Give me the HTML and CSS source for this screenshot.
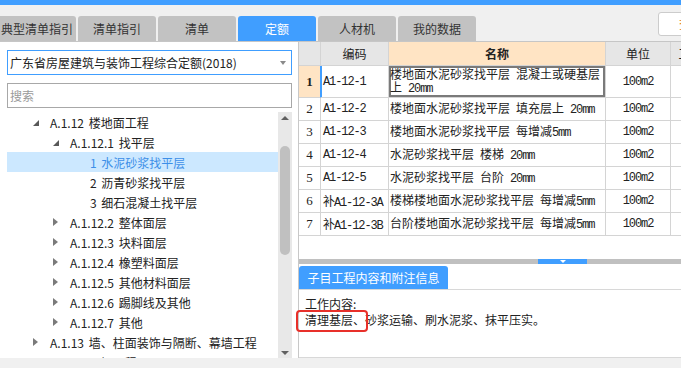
FILE: index.html
```html
<!DOCTYPE html>
<html lang="zh-CN">
<head>
    <meta charset="UTF-8">
    <meta name="viewport" content="width=device-width, initial-scale=1.0">
    <title>定额库</title>
    <link rel="stylesheet" href="styles.css">
</head>
<body>
    <div class="topbar"></div>

    <!-- 顶部页签 -->
    <div class="tabbar">
        <div class="tab">典型清单指引</div>
        <div class="tab">清单指引</div>
        <div class="tab">清单</div>
        <div class="tab active">定额</div>
        <div class="tab">人材机</div>
        <div class="tab">我的数据</div>
        <div class="tool-box">查询</div>
    </div>

    <div class="main">
        <!-- 左侧：定额库与章节树 -->
        <div class="side">
            <div class="select-box">
                <span>广东省房屋建筑与装饰工程综合定额(2018)</span>
                <i class="caret"></i>
            </div>
            <input type="text" class="search-box" placeholder="搜索">
            <div class="tree-wrap">
                <ul class="tree">
                    <li class="l1"><i class="arrow open"></i>A.1.12 楼地面工程</li>
                    <li class="l2"><i class="arrow open"></i>A.1.12.1 找平层</li>
                    <li class="l3 sel">1 水泥砂浆找平层</li>
                    <li class="l3">2 沥青砂浆找平层</li>
                    <li class="l3">3 细石混凝土找平层</li>
                    <li class="l2"><i class="arrow"></i>A.1.12.2 整体面层</li>
                    <li class="l2"><i class="arrow"></i>A.1.12.3 块料面层</li>
                    <li class="l2"><i class="arrow"></i>A.1.12.4 橡塑料面层</li>
                    <li class="l2"><i class="arrow"></i>A.1.12.5 其他材料面层</li>
                    <li class="l2"><i class="arrow"></i>A.1.12.6 踢脚线及其他</li>
                    <li class="l2"><i class="arrow"></i>A.1.12.7 其他</li>
                    <li class="l1"><i class="arrow"></i>A.1.13 墙、柱面装饰与隔断、幕墙工程</li>
                    <li class="l1"><i class="arrow"></i>A.1.14 天棚工程</li>
                </ul>
                <div class="scrollbar">
                    <div class="sb-up"></div>
                    <div class="sb-track"><div class="sb-thumb"></div></div>
                    <div class="sb-down"></div>
                </div>
            </div>
        </div>

        <!-- 右侧：定额子目表格 -->
        <div class="content">
            <div class="grid-area">
                <table class="grid">
                    <colgroup>
                        <col class="c-no">
                        <col class="c-code">
                        <col class="c-name">
                        <col class="c-unit">
                        <col class="c-qty">
                        <col class="c-more">
                    </colgroup>
                    <thead>
                        <tr>
                            <th></th>
                            <th>编码</th>
                            <th class="sorted">名称</th>
                            <th>单位</th>
                            <th>工程量</th>
                            <th></th>
                        </tr>
                    </thead>
                    <tbody>
                        <tr class="current tall">
                            <td class="no">1</td>
                            <td class="code">A1-12-1</td>
                            <td class="name focus">楼地面水泥砂浆找平层&ensp;混凝土或硬基层<br>上&ensp;<span class="en">20mm</span></td>
                            <td class="unit">100m2</td>
                            <td></td><td></td>
                        </tr>
                        <tr>
                            <td class="no">2</td>
                            <td class="code">A1-12-2</td>
                            <td class="name">楼地面水泥砂浆找平层&ensp;填充层上&ensp;<span class="en">20mm</span></td>
                            <td class="unit">100m2</td>
                            <td></td><td></td>
                        </tr>
                        <tr>
                            <td class="no">3</td>
                            <td class="code">A1-12-3</td>
                            <td class="name">楼地面水泥砂浆找平层&ensp;每增减<span class="en">5mm</span></td>
                            <td class="unit">100m2</td>
                            <td></td><td></td>
                        </tr>
                        <tr>
                            <td class="no">4</td>
                            <td class="code">A1-12-4</td>
                            <td class="name">水泥砂浆找平层&ensp;楼梯&ensp;<span class="en">20mm</span></td>
                            <td class="unit">100m2</td>
                            <td></td><td></td>
                        </tr>
                        <tr>
                            <td class="no">5</td>
                            <td class="code">A1-12-5</td>
                            <td class="name">水泥砂浆找平层&ensp;台阶&ensp;<span class="en">20mm</span></td>
                            <td class="unit">100m2</td>
                            <td></td><td></td>
                        </tr>
                        <tr>
                            <td class="no">6</td>
                            <td class="code">补A1-12-3A</td>
                            <td class="name">楼梯楼地面水泥砂浆找平层&ensp;每增减<span class="en">5mm</span></td>
                            <td class="unit">100m2</td>
                            <td></td><td></td>
                        </tr>
                        <tr>
                            <td class="no">7</td>
                            <td class="code">补A1-12-3B</td>
                            <td class="name">台阶楼地面水泥砂浆找平层&ensp;每增减<span class="en">5mm</span></td>
                            <td class="unit">100m2</td>
                            <td></td><td></td>
                        </tr>
                    </tbody>
                </table>
            </div>

            <div class="splitter"><div class="split-handle"></div></div>

            <!-- 子目信息 -->
            <div class="info">
                <div class="info-tabs">
                    <div class="info-tab">子目工程内容和附注信息</div>
                </div>
                <div class="info-body">
                    <p>工作内容:</p>
                    <p>清理基层、砂浆运输、刷水泥浆、抹平压实。</p>
                </div>
                <div class="mark"></div>
            </div>
        </div>
    </div>

    <div class="statusbar"></div>
</body>
</html>
```

FILE: styles.css
```css
/* Estilos gerais */
* {
    box-sizing: border-box;
}
html, body {
    margin: 0;
}
body {
    font-family: "Noto Sans CJK SC", "Noto Sans", sans-serif;
    font-size: 12px;
    color: #222;
    background-color: #f0f0f0;
    width: 681px;
    height: 368px;
    overflow: hidden;
}
.topbar {
    height: 5px;
    background-color: #409eff;
}

/* Página superior */
.tabbar {
    display: flex;
    align-items: flex-start;
    gap: 2px;
    height: 37px;
    padding-top: 11px;
    border-bottom: 1px solid #c6c6c6;
}
.tab {
    flex: none;
    width: 78px;
    height: 25px;
    line-height: 25px;
    text-align: center;
    background-color: #c2c2c2;
    color: #333;
    border-radius: 3px 3px 0 0;
}
.tab:first-child {
    margin-left: -2px;
}
.tab.active {
    background-color: #409eff;
    color: #fff;
}
.tool-box {
    flex: none;
    margin-left: auto;
    margin-right: -40px;
    margin-top: -4px;
    width: 63px;
    height: 24px;
    line-height: 22px;
    padding-left: 20px;
    background-color: #fff;
    border: 1px solid #ccc;
    border-radius: 3px;
    color: #e07b20;
    white-space: nowrap;
    overflow: hidden;
}

.main {
    display: flex;
    height: 316px;
    background-color: #fff;
}

/* Lado esquerdo */
.side {
    flex: none;
    width: 298px;
    display: flex;
    flex-direction: column;
    padding: 8px 6px 0 7px;
}
.select-box {
    display: flex;
    align-items: center;
    height: 25px;
    padding: 0 5px 0 2px;
    border: 1px solid #409eff;
    color: #222;
}
.select-box span {
    flex: 1;
    white-space: nowrap;
}
.caret {
    border-top: 4px solid #8a8a8a;
    border-left: 3px solid transparent;
    border-right: 3px solid transparent;
}
.search-box {
    margin: 8px 0 0;
    height: 25px;
    padding: 0 2px;
    border: 1px solid #a8a8a8;
    border-radius: 0;
    font-family: inherit;
    font-size: 12px;
    outline: none;
}
.search-box::placeholder {
    color: #9a9a9a;
}
.tree-wrap {
    flex: 1;
    min-height: 0;
    margin-top: 4px;
    display: flex;
}
.tree {
    flex: 1;
    list-style: none;
    margin: 0;
    padding: 0;
    overflow: hidden;
    word-spacing: 2px;
}
.tree li {
    display: flex;
    align-items: center;
    height: 20px;
    white-space: nowrap;
}
.tree .l1 {
    padding-left: 26px;
}
.tree .l2 {
    padding-left: 46px;
}
.tree .l3 {
    padding-left: 83px;
}
.tree li.sel {
    background-color: #cce8ff;
    color: #3d8fe8;
}
.arrow {
    flex: none;
    width: 0;
    height: 0;
    margin-right: 12px;
    border-left: 5px solid #7a7a7a;
    border-top: 4px solid transparent;
    border-bottom: 4px solid transparent;
}
.arrow.open {
    margin-top: 2px;
    margin-right: 11px;
    border-left: 6px solid transparent;
    border-top: 0;
    border-bottom: 6px solid #585858;
}
.scrollbar {
    flex: none;
    width: 14px;
    display: flex;
    flex-direction: column;
    align-items: center;
    background-color: #e8e8e8;
}
.sb-up, .sb-down {
    display: flex;
    align-items: center;
    justify-content: center;
    height: 11px;
}
.sb-up::before {
    content: "";
    border-bottom: 4px solid #606060;
    border-left: 4px solid transparent;
    border-right: 4px solid transparent;
}
.sb-down::before {
    content: "";
    border-top: 4px solid #606060;
    border-left: 4px solid transparent;
    border-right: 4px solid transparent;
}
.sb-track {
    flex: 1;
}
.sb-thumb {
    width: 10px;
    height: 109px;
    margin-top: 23px;
    border-radius: 5px;
    background-color: #c0c0c0;
}

/* Lado direito: tabela */
.content {
    flex: 1;
    min-width: 0;
    display: flex;
    flex-direction: column;
    border-left: 1px solid #c8c8c8;
}
.grid-area {
    flex: none;
    height: 217px;
    overflow: hidden;
}
.grid {
    table-layout: fixed;
    border-collapse: separate;
    border-spacing: 0;
    width: 504px;
}
.c-no { width: 22px; }
.c-code { width: 68px; }
.c-name { width: 217px; }
.c-unit { width: 65px; }
.c-qty { width: 52px; }
.c-more { width: 80px; }
.grid th, .grid td {
    padding: 0 2px;
    border-right: 1px solid #d4d4d4;
    border-bottom: 1px solid #d4d4d4;
    white-space: nowrap;
    overflow: hidden;
}
.grid thead tr {
    height: 24px;
}
.grid th {
    background-color: #e6e6e6;
    font-weight: normal;
    color: #222;
}
.grid th.sorted {
    background-color: #ffe4c4;
    font-weight: bold;
}
.grid tbody tr {
    height: 23px;
}
.grid tbody tr.tall {
    height: 32px;
}
.grid .no {
    padding: 0;
    text-align: center;
    font-family: "Liberation Serif", serif;
    font-size: 13px;
}
.grid .current .no {
    background-color: #ffe4c4;
    font-weight: bold;
    border-right-color: #409eff;
}
.grid .current .code {
    box-shadow: inset 1px 0 #409eff;
}
.grid .code, .grid .unit, .grid .en {
    font-family: "Liberation Mono", "Noto Sans CJK SC", monospace;
    font-size: 12px;
    letter-spacing: -1.1px;
}
.grid .unit {
    text-align: center;
}
.grid .name {
    line-height: 12.5px;
    padding-left: 1px;
}
.grid .focus {
    box-shadow: inset 0 0 0 2px #7a7a7a;
}

.splitter {
    flex: none;
    display: flex;
    height: 5px;
    background-color: #c0c0c0;
}
.split-handle {
    display: flex;
    justify-content: center;
    width: 49px;
    margin-left: 239px;
    padding-top: 1px;
    background-color: #409eff;
}
.split-handle::before {
    content: "";
    border-top: 3px solid #fff;
    border-left: 3px solid transparent;
    border-right: 3px solid transparent;
}

/* Informações do subitem */
.info {
    flex: 1;
    position: relative;
    border-bottom: 1px solid #d8d8d8;
}
.info-tabs {
    display: flex;
    padding-top: 2px;
    border-bottom: 1px solid #d8d8d8;
}
.info-tab {
    width: 149px;
    height: 23px;
    line-height: 23px;
    text-align: center;
    background-color: #409eff;
    color: #fff;
    border-radius: 3px 3px 0 0;
}
.info-body {
    padding: 6px;
    line-height: 16px;
}
.info-body p {
    margin: 0;
}
.mark {
    position: absolute;
    left: -3px;
    top: 46px;
    width: 72px;
    height: 22px;
    border: 2px solid #e8302a;
    border-radius: 4px;
}

.statusbar {
    height: 10px;
    background-color: #f0f0f0;
}
```
